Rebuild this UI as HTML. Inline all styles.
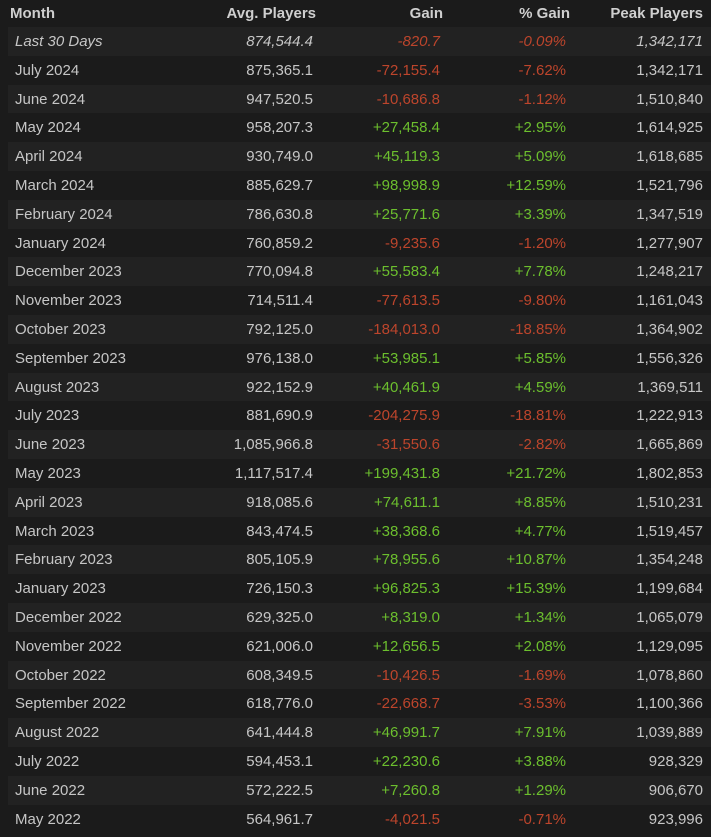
<!DOCTYPE html>
<html><head><meta charset="utf-8"><style>
html,body{margin:0;padding:0;background:#1b1b1b;width:711px;height:837px;overflow:hidden}
body{font-family:"Liberation Sans",Arial,sans-serif;font-size:15px;color:#c6c6c6}
.r{position:absolute;left:8px;right:0;height:28.8px;line-height:30px}
.r.l{background:#222222}
.r span{position:absolute;white-space:nowrap}
.m{left:7px}.a{right:398px}.g{right:271px}.p{right:145px}.k{right:8px}
.h{left:0;font-weight:bold;color:#cfcfcf;line-height:27px;height:27px}
.h .m{left:10px}.h .a{right:395px}.h .g{right:268px}.h .p{right:141px}
.i span{font-style:italic}
.n{color:#bd452c}.y{color:#6cbf2e}
</style></head><body>
<div class="r h" style="top:0;left:0"><span class="m">Month</span><span class="a">Avg. Players</span><span class="g">Gain</span><span class="p">% Gain</span><span class="k">Peak Players</span></div>
<div id="t"></div>
<script>
var d=[["Last 30 Days","874,544.4","-820.7","-0.09%","1,342,171"],
["July 2024","875,365.1","-72,155.4","-7.62%","1,342,171"],
["June 2024","947,520.5","-10,686.8","-1.12%","1,510,840"],
["May 2024","958,207.3","+27,458.4","+2.95%","1,614,925"],
["April 2024","930,749.0","+45,119.3","+5.09%","1,618,685"],
["March 2024","885,629.7","+98,998.9","+12.59%","1,521,796"],
["February 2024","786,630.8","+25,771.6","+3.39%","1,347,519"],
["January 2024","760,859.2","-9,235.6","-1.20%","1,277,907"],
["December 2023","770,094.8","+55,583.4","+7.78%","1,248,217"],
["November 2023","714,511.4","-77,613.5","-9.80%","1,161,043"],
["October 2023","792,125.0","-184,013.0","-18.85%","1,364,902"],
["September 2023","976,138.0","+53,985.1","+5.85%","1,556,326"],
["August 2023","922,152.9","+40,461.9","+4.59%","1,369,511"],
["July 2023","881,690.9","-204,275.9","-18.81%","1,222,913"],
["June 2023","1,085,966.8","-31,550.6","-2.82%","1,665,869"],
["May 2023","1,117,517.4","+199,431.8","+21.72%","1,802,853"],
["April 2023","918,085.6","+74,611.1","+8.85%","1,510,231"],
["March 2023","843,474.5","+38,368.6","+4.77%","1,519,457"],
["February 2023","805,105.9","+78,955.6","+10.87%","1,354,248"],
["January 2023","726,150.3","+96,825.3","+15.39%","1,199,684"],
["December 2022","629,325.0","+8,319.0","+1.34%","1,065,079"],
["November 2022","621,006.0","+12,656.5","+2.08%","1,129,095"],
["October 2022","608,349.5","-10,426.5","-1.69%","1,078,860"],
["September 2022","618,776.0","-22,668.7","-3.53%","1,100,366"],
["August 2022","641,444.8","+46,991.7","+7.91%","1,039,889"],
["July 2022","594,453.1","+22,230.6","+3.88%","928,329"],
["June 2022","572,222.5","+7,260.8","+1.29%","906,670"],
["May 2022","564,961.7","-4,021.5","-0.71%","923,996"]];
var h="";d.forEach(function(r,i){var c=r[2][0]=="-"?"n":"y";
h+='<div class="r'+(i%2==0?' l':'')+(i==0?' i':'')+'" style="top:'+(27+i*28.8)+'px"><span class="m">'+r[0]+'</span><span class="a">'+r[1]+'</span><span class="g '+c+'">'+r[2]+'</span><span class="p '+c+'">'+r[3]+'</span><span class="k">'+r[4]+'</span></div>';});
document.getElementById("t").innerHTML=h;
</script>
</body></html>
